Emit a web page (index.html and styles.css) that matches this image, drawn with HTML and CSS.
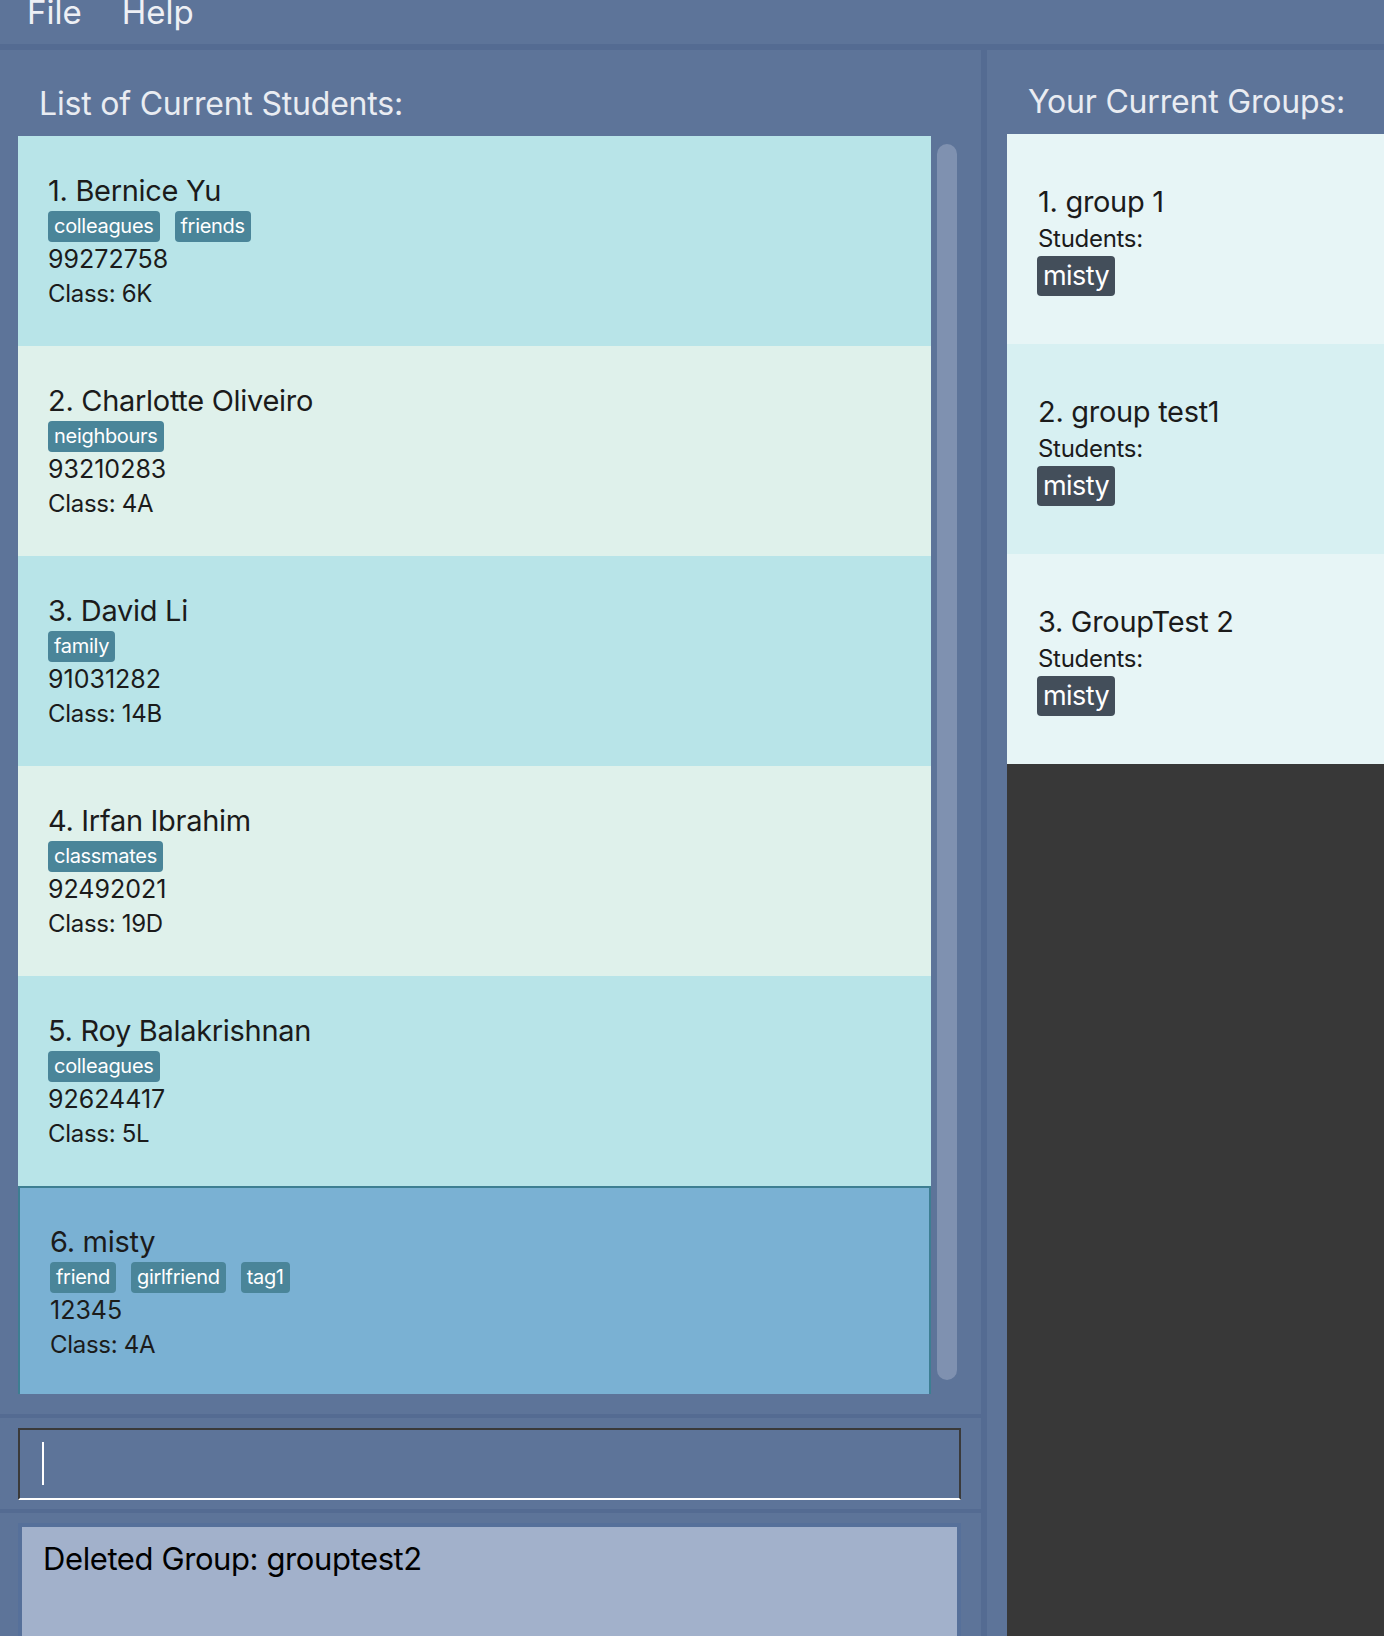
FILE: index.html
```html
<!DOCTYPE html>
<html lang="en">
<head>
<meta charset="utf-8">
<title>Students</title>
<link rel="stylesheet" href="styles.css">
</head>
<body>
<div class="menubar">
  <span class="menu-item">File</span>
  <span class="menu-item">Help</span>
</div>
<div class="main">
  <div class="left">
    <section class="list-section">
      <h2 class="panel-title">List of Current Students:</h2>
      <div class="list-wrap">
        <div class="list">
          <div class="card odd">
            <div class="name">1. Bernice Yu</div>
            <div class="tags"><span class="tag">colleagues</span><span class="tag">friends</span></div>
            <div class="phone">99272758</div>
            <div class="cls">Class: 6K</div>
          </div>
          <div class="card even">
            <div class="name">2. Charlotte Oliveiro</div>
            <div class="tags"><span class="tag">neighbours</span></div>
            <div class="phone">93210283</div>
            <div class="cls">Class: 4A</div>
          </div>
          <div class="card odd">
            <div class="name">3. David Li</div>
            <div class="tags"><span class="tag">family</span></div>
            <div class="phone">91031282</div>
            <div class="cls">Class: 14B</div>
          </div>
          <div class="card even">
            <div class="name">4. Irfan Ibrahim</div>
            <div class="tags"><span class="tag">classmates</span></div>
            <div class="phone">92492021</div>
            <div class="cls">Class: 19D</div>
          </div>
          <div class="card odd">
            <div class="name">5. Roy Balakrishnan</div>
            <div class="tags"><span class="tag">colleagues</span></div>
            <div class="phone">92624417</div>
            <div class="cls">Class: 5L</div>
          </div>
          <div class="card selected">
            <div class="name">6. misty</div>
            <div class="tags"><span class="tag">friend</span><span class="tag">girlfriend</span><span class="tag">tag1</span></div>
            <div class="phone">12345</div>
            <div class="cls">Class: 4A</div>
          </div>
        </div>
        <div class="scrollbar"><div class="thumb"></div></div>
      </div>
    </section>
    <section class="command-section">
      <div class="command"><span class="caret"></span></div>
    </section>
    <section class="result-section">
      <div class="result">Deleted Group: grouptest2</div>
    </section>
  </div>
  <div class="right">
    <h2 class="panel-title groups-title">Your Current Groups:</h2>
    <div class="groups">
      <div class="group g-odd">
        <div class="name">1. group 1</div>
        <div class="students">Students:</div>
        <div class="gtags"><span class="gtag">misty</span></div>
      </div>
      <div class="group g-even">
        <div class="name">2. group test1</div>
        <div class="students">Students:</div>
        <div class="gtags"><span class="gtag">misty</span></div>
      </div>
      <div class="group g-odd">
        <div class="name">3. GroupTest 2</div>
        <div class="students">Students:</div>
        <div class="gtags"><span class="gtag">misty</span></div>
      </div>
    </div>
  </div>
</div>
</body>
</html>
```

FILE: styles.css
```css
* { box-sizing: border-box; }

html, body {
  margin: 0;
  padding: 0;
}

body {
  width: 1384px;
  height: 1636px;
  overflow: hidden;
  background: #5d7499;
  font-family: Inter, "Noto Sans", sans-serif;
  color: #1b1b1b;
}

.menubar {
  height: 50px;
  border-bottom: 6px solid #546b92;
  display: flex;
  align-items: flex-start;
  gap: 40px;
  padding-left: 27px;
}

.menu-item {
  font-size: 33px;
  line-height: 24px;
  color: #eef0f5;
}

.main {
  display: flex;
  height: 1586px;
}

.left {
  width: 987px;
  flex-shrink: 0;
  border-right: 6px solid #546b92;
  display: flex;
  flex-direction: column;
  overflow: hidden;
}

.panel-title {
  margin: 0;
  font-weight: 400;
  font-size: 32px;
  line-height: 40px;
  color: #e9ecf2;
  height: 86px;
  padding-top: 34px;
  padding-left: 39px;
  letter-spacing: -0.2px;
}

.list-section {
  flex-shrink: 0;
  height: 1368px;
  border-bottom: 4px solid #546b92;
}

.list-wrap {
  display: flex;
  margin-left: 18px;
  height: 1258px;
}

.list {
  width: 913px;
  height: 1258px;
  overflow: hidden;
}

.card {
  height: 210px;
  padding: 38px 30px 0;
}

.card.odd { background: #b8e4e8; }
.card.even { background: #dff1eb; }
.card.selected {
  background: #7ab1d3;
  border: 2px solid #3d7e92;
  padding: 37px 30px 0;
}

.name {
  font-size: 29px;
  line-height: 34px;
  letter-spacing: -0.3px;
}

.tags {
  display: flex;
  gap: 15px;
  margin-top: 3px;
}

.tag {
  background: #4a8599;
  color: #fff;
  font-size: 20px;
  line-height: 31px;
  height: 31px;
  padding: 0 6px;
  border-radius: 4px;
  letter-spacing: -0.3px;
}

.phone {
  font-size: 25px;
  line-height: 33px;
  margin-top: 1px;
}

.cls {
  font-size: 24px;
  line-height: 35px;
  letter-spacing: -0.3px;
}

.scrollbar {
  width: 20px;
  margin-left: 6px;
  padding-top: 8px;
}

.thumb {
  width: 20px;
  height: 1236px;
  background: #7f91b0;
  border-radius: 10px;
}

.command-section {
  flex-shrink: 0;
  height: 95px;
  padding: 10px 20px 0 18px;
  border-bottom: 4px solid #546b92;
}

.command {
  height: 72px;
  border: 2px solid #3a3a3a;
  border-bottom-color: #ffffff;
  background: #5d7499;
  padding: 12px 0 0 22px;
}

.caret {
  display: block;
  width: 2px;
  height: 43px;
  background: #ffffff;
}

.result-section {
  flex: 1;
  min-height: 0;
  padding: 10px 20px 0 18px;
}

.result {
  height: 200px;
  border: 4px solid #56709a;
  background: #a2b1cb;
  color: #000;
  font-size: 31px;
  line-height: 40px;
  padding: 12px 0 0 21px;
  letter-spacing: -0.4px;
}

.right {
  flex: 1;
  display: flex;
  flex-direction: column;
}

.groups-title {
  height: 84px;
  padding-top: 32px;
  padding-left: 41px;
}

.groups {
  flex: 1;
  margin-left: 20px;
  background: #383838;
}

.group {
  height: 210px;
  padding: 51px 31px 0;
}

.group.g-odd { background: #e7f5f6; }
.group.g-even { background: #d7f0f2; }

.students {
  font-size: 24px;
  line-height: 33px;
  margin-top: 3px;
  letter-spacing: -0.3px;
}

.gtags {
  display: flex;
  margin-top: 1px;
  margin-left: -1px;
}

.gtag {
  background: #434e5a;
  color: #fff;
  font-size: 27px;
  line-height: 40px;
  height: 40px;
  padding: 0 6px;
  border-radius: 4px;
  letter-spacing: -0.6px;
}
```
